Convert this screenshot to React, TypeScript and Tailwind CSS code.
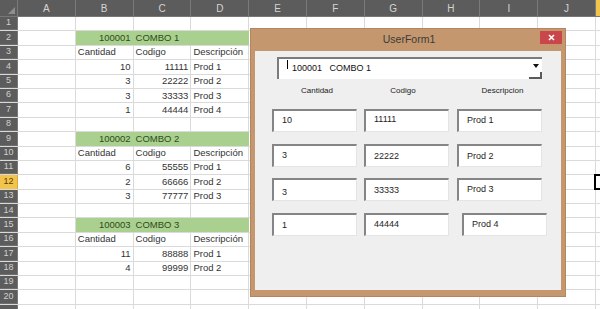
import React from 'react'

const cols = ['A', 'B', 'C', 'D', 'E', 'F', 'G', 'H', 'I', 'J']

type Row = { b?: string; c?: string; d?: string; kind?: 'title' | 'head' | 'data' }

const sheet: Record<number, Row> = {
  2: { b: '100001', c: 'COMBO 1', kind: 'title' },
  3: { b: 'Cantidad', c: 'Codigo', d: 'Descripción', kind: 'head' },
  4: { b: '10', c: '11111', d: 'Prod 1', kind: 'data' },
  5: { b: '3', c: '22222', d: 'Prod 2', kind: 'data' },
  6: { b: '3', c: '33333', d: 'Prod 3', kind: 'data' },
  7: { b: '1', c: '44444', d: 'Prod 4', kind: 'data' },
  9: { b: '100002', c: 'COMBO 2', kind: 'title' },
  10: { b: 'Cantidad', c: 'Codigo', d: 'Descripción', kind: 'head' },
  11: { b: '6', c: '55555', d: 'Prod 1', kind: 'data' },
  12: { b: '2', c: '66666', d: 'Prod 2', kind: 'data' },
  13: { b: '3', c: '77777', d: 'Prod 3', kind: 'data' },
  15: { b: '100003', c: 'COMBO 3', kind: 'title' },
  16: { b: 'Cantidad', c: 'Codigo', d: 'Descripción', kind: 'head' },
  17: { b: '11', c: '88888', d: 'Prod 1', kind: 'data' },
  18: { b: '4', c: '99999', d: 'Prod 2', kind: 'data' },
}

const formRows = [
  { q: '10', c: '11111', d: 'Prod 1', mt: 'mt-[13px]', dl: '', qPad: 'pt-0', cPad: 'pb-[2px]', dPad: 'pt-0' },
  { q: '3', c: '22222', d: 'Prod 2', mt: 'mt-[12px]', dl: '', qPad: 'pt-0', cPad: 'pt-[2px]', dPad: 'pt-[2px]' },
  { q: '3', c: '33333', d: 'Prod 3', mt: 'mt-[11px]', dl: '', qPad: 'pt-[6px]', cPad: 'pt-[2px]', dPad: 'pb-[1px]' },
  { q: '1', c: '44444', d: 'Prod 4', mt: 'mt-[12px]', dl: 'ml-[6px]', qPad: 'pt-[2px]', cPad: 'pt-0', dPad: 'pt-0' },
]

function Cell({ col, row }: { col: string; row: Row | undefined }) {
  const kind = row?.kind
  const green = kind === 'title' && (col === 'B' || col === 'C' || col === 'D')
  let text = ''
  let align = 'justify-start pl-[2px]'
  if (row) {
    if (col === 'B') {
      text = row.b ?? ''
      if (kind !== 'head') align = 'justify-end pr-[2px]'
    }
    if (col === 'C') {
      text = row.c ?? ''
      if (kind === 'data') align = 'justify-end pr-[2px]'
    }
    if (col === 'D') text = row.d ?? ''
  }
  return (
    <div
      className={`w-[57.8px] shrink-0 h-full flex items-center border-r ${align} ${
        green ? 'bg-[#a9d08e] border-[#a9d08e] text-[#2f4a1c]' : 'border-[#dadada] text-[#333]'
      }`}
    >
      {text}
    </div>
  )
}

function TextBox({ value, pad, extra = '' }: { value: string; pad: string; extra?: string }) {
  return (
    <div
      className={`w-[85px] h-[23px] shrink-0 bg-white border-t-2 border-l-2 border-r border-b border-t-[#858585] border-l-[#858585] border-r-[#e4e4e4] border-b-[#e4e4e4] flex items-center pl-[8px] text-[9px] text-[#1e1e1e] ${pad} ${extra}`}
    >
      {value}
    </div>
  )
}

export default function App() {
  const rows = Array.from({ length: 21 }, (_, i) => i + 1)

  return (
    <div className="relative w-[600px] h-[309px] overflow-hidden bg-white font-['Liberation_Sans',Arial,sans-serif] text-[9.5px]">
      {/* column headers */}
      <div className="flex h-[17px] bg-[#5c5c5c] border-b border-[#777]">
        <div className="w-[18px] shrink-0 h-full border-r border-[#7a7a7a] relative">
          <div className="absolute right-[2px] bottom-[2px] w-0 h-0 border-l-[7px] border-l-transparent border-b-[7px] border-b-[#8e8e8e]" />
        </div>
        {cols.map((c) => (
          <div
            key={c}
            className="w-[57.8px] shrink-0 h-full flex items-center justify-center border-r border-[#7a7a7a] text-[10px] text-[#d4d4d4]"
          >
            {c}
          </div>
        ))}
        <div className="flex-1 h-full bg-[#f2c44c]" />
      </div>

      {/* rows */}
      {rows.map((r) => (
        <div key={r} className="flex h-[14.4px] border-b border-[#dadada]">
          <div
            className={`w-[18px] shrink-0 h-full flex items-center justify-center border-r text-[9px] ${
              r === 12
                ? 'bg-[#f2c44c] text-[#5a3c00] border-[#d9a93a]'
                : 'bg-[#5c5c5c] text-[#d0d0d0] border-[#7a7a7a] border-b border-b-[#6e6e6e]'
            }`}
          >
            {r < 21 ? r : ''}
          </div>
          {cols.map((c) => (
            <Cell key={c} col={c} row={sheet[r]} />
          ))}
          <div className="flex-1 h-full relative">
            {r === 12 && (
              <div className="absolute -left-[2px] -top-[1px] w-[20px] h-[16px] border-2 border-black" />
            )}
          </div>
        </div>
      ))}

      {/* UserForm window */}
      <div className="absolute left-[250px] top-[28px] w-[316px] h-[269px] bg-[#c4976f] border border-[#b4865f] flex flex-col">
        <div className="h-[22px] shrink-0 relative flex items-center justify-center text-[10.5px] text-[#3b3b3b] pl-[2px]">
          UserForm1
          <div className="absolute right-[3px] top-[2px] w-[22px] h-[13px] bg-[#c9464b] flex items-center justify-center">
            <svg width="7" height="7" viewBox="0 0 7 7">
              <path d="M1 1L6 6M6 1L1 6" stroke="#fff" strokeWidth="1.6" />
            </svg>
          </div>
        </div>

        <div className="mx-[4px] mb-[6px] flex-1 bg-[#efefef] pl-[17px] pt-[6px]">
          {/* combo box */}
          <div className="ml-[5px] w-[265px] h-[22px] bg-white border-t-2 border-l-2 border-[#7c7c7c] flex">
            <div className="flex-1 flex items-start">
              <span className="ml-[8px] mt-[1px] w-px h-[9px] bg-black" />
              <span className="ml-[4px] self-center whitespace-pre text-[9px] text-[#111]">100001   COMBO 1</span>
            </div>
            <div className="w-[13px] h-full flex flex-col">
              <div className="flex-1 flex items-center justify-center">
                <svg width="6" height="4" viewBox="0 0 6 4">
                  <path d="M0 0H6L3 4Z" fill="#111" />
                </svg>
              </div>
              <div className="h-[7px] border-r-2 border-b-2 border-[#5a5a5a]" />
            </div>
          </div>

          {/* labels */}
          <div className="flex mt-[7px] h-[10px] items-center text-[8px] text-[#222] gap-[7px]">
            <div className="w-[85px] text-center pl-[5px]">Cantidad</div>
            <div className="w-[85px] text-center pr-[7px]">Codigo</div>
            <div className="w-[85px] text-center pl-[8px]">Descripcion</div>
          </div>

          {/* text boxes */}
          {formRows.map((fr, i) => (
            <div key={i} className={`flex gap-[7px] ${fr.mt}`}>
              <TextBox value={fr.q} pad={fr.qPad} />
              <TextBox value={fr.c} pad={fr.cPad} />
              <TextBox value={fr.d} pad={fr.dPad} extra={`ml-[1px] ${fr.dl}`} />
            </div>
          ))}
        </div>
      </div>
    </div>
  )
}
